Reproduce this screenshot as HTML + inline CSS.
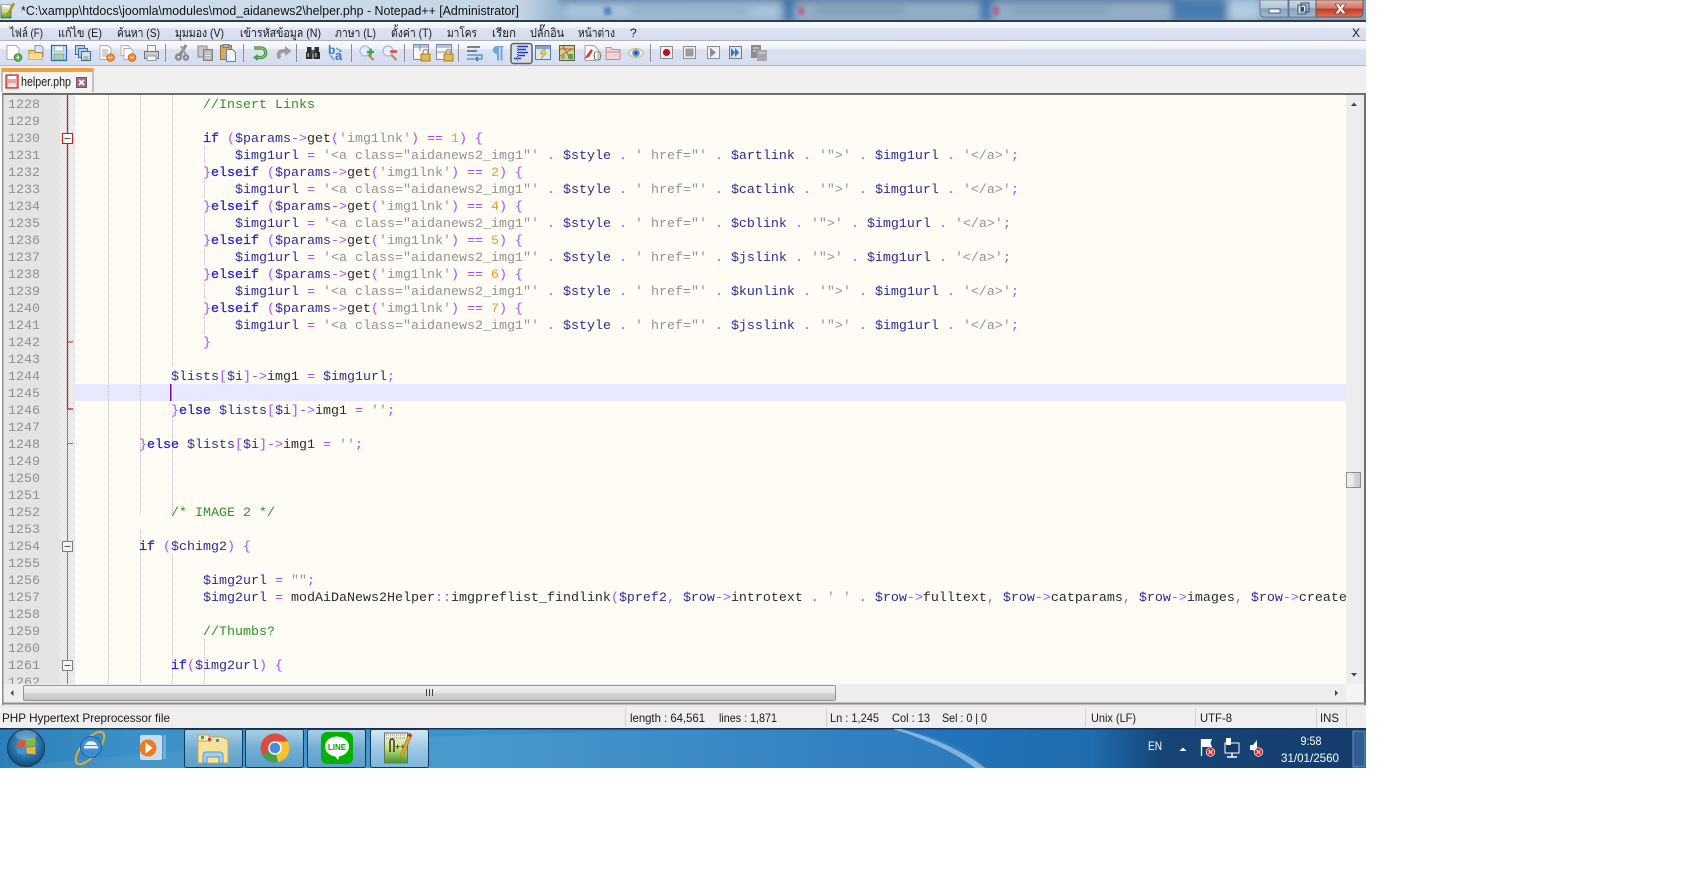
<!DOCTYPE html>
<html><head><meta charset="utf-8"><title>helper.php - Notepad++</title>
<style>
html,body{margin:0;padding:0;background:#fff;width:1694px;height:876px;overflow:hidden}
svg{display:block}
text{white-space:pre}
.m{font-family:"Liberation Mono","DejaVu Sans Mono",monospace;font-size:13.333px;fill:#000;fill-opacity:.84}
.ln{fill:#808080}
.k{fill:#0000c8;stroke:#0000c8;stroke-width:.25}.v{fill:#000080}.o{fill:#8000ff;fill-opacity:.7}.s{fill:#808080;fill-opacity:.85}.n{fill:#ff8000}.c{fill:#008000}.d{fill:#000}
.u{font-family:"Liberation Sans","Noto Sans CJK JP",sans-serif;font-size:12px;fill:#1a1a1a}
.t{font-family:"Liberation Sans","Noto Sans CJK JP",sans-serif;font-size:12px;fill:#fff}
</style></head><body>
<svg xmlns="http://www.w3.org/2000/svg" width="1694" height="876" viewBox="0 0 1694 876">
<defs>
<filter id="b" x="-5%" y="-50%" width="110%" height="200%"><feGaussianBlur stdDeviation="4"/></filter>
<filter id="b1" x="-50%" y="-50%" width="200%" height="200%"><feGaussianBlur stdDeviation="1.5"/></filter>
<linearGradient id="menu" x1="0" y1="0" x2="0" y2="1"><stop offset="0" stop-color="#fbfcfe"/><stop offset=".3" stop-color="#eef1f9"/><stop offset=".35" stop-color="#dce2f1"/><stop offset="1" stop-color="#d5dcee"/></linearGradient>
<linearGradient id="title" x1="0" y1="0" x2="1" y2="0"><stop offset="0" stop-color="#d3e1ee"/><stop offset=".38" stop-color="#c4d6e6"/><stop offset=".42" stop-color="#86a8c6"/><stop offset="1" stop-color="#7fa2c4"/></linearGradient>
<linearGradient id="tb" x1="0" y1="0" x2="1" y2="0"><stop offset="0" stop-color="#2b7fb8"/><stop offset=".1" stop-color="#3c92c8"/><stop offset=".35" stop-color="#3f94cc"/><stop offset=".7" stop-color="#2273ba"/><stop offset=".8" stop-color="#1f6cae"/><stop offset=".85" stop-color="#164577"/><stop offset="1" stop-color="#153c6e"/></linearGradient>
<linearGradient id="btn" x1="0" y1="0" x2="0" y2="1"><stop offset="0" stop-color="#a9d0e8"/><stop offset=".5" stop-color="#72add3"/><stop offset="1" stop-color="#5b9fcb"/></linearGradient>
<linearGradient id="btn2" x1="0" y1="0" x2="0" y2="1"><stop offset="0" stop-color="#d3e8f5"/><stop offset=".5" stop-color="#9cc8e4"/><stop offset="1" stop-color="#7db6dc"/></linearGradient>
<linearGradient id="sb" x1="0" y1="0" x2="0" y2="1"><stop offset="0" stop-color="#f2f2f2"/><stop offset=".5" stop-color="#e4e4e4"/><stop offset=".55" stop-color="#d3d3d3"/><stop offset="1" stop-color="#c4c4c4"/></linearGradient>
<linearGradient id="sbv" x1="0" y1="0" x2="1" y2="0"><stop offset="0" stop-color="#f2f2f2"/><stop offset=".5" stop-color="#e6e6e6"/><stop offset=".55" stop-color="#d6d6d6"/><stop offset="1" stop-color="#c8c8c8"/></linearGradient>
<linearGradient id="wb" x1="0" y1="0" x2="0" y2="1"><stop offset="0" stop-color="#ccd9e6"/><stop offset=".45" stop-color="#b4c5d8"/><stop offset=".5" stop-color="#8aa2bc"/><stop offset="1" stop-color="#a4b8cc"/></linearGradient>
<linearGradient id="wc" x1="0" y1="0" x2="0" y2="1"><stop offset="0" stop-color="#e2b0a6"/><stop offset=".45" stop-color="#d27a6a"/><stop offset=".55" stop-color="#c03c28"/><stop offset="1" stop-color="#d8765a"/></linearGradient>
<radialGradient id="orb" cx=".5" cy=".4" r=".6"><stop offset="0" stop-color="#5aa8d4"/><stop offset=".75" stop-color="#1f6498"/><stop offset="1" stop-color="#154a72"/></radialGradient>
<pattern id="hat" width="2" height="2" patternUnits="userSpaceOnUse"><rect width="2" height="2" fill="#fbfbfb"/><rect width="1" height="1" fill="#dcdcdc"/><rect x="1" y="1" width="1" height="1" fill="#dcdcdc"/></pattern>
<clipPath id="ed"><rect x="3" y="95" width="1343" height="589"/></clipPath>
<clipPath id="ed2"><rect x="75" y="95" width="1271" height="589"/></clipPath>
<linearGradient id="npp" x1="0" y1="0" x2="0" y2="1"><stop offset="0" stop-color="#f4f6e8"/><stop offset=".5" stop-color="#c9df7a"/><stop offset="1" stop-color="#3f9a2c"/></linearGradient>
</defs>

<rect width="1694" height="876" fill="#fff"/>

<!-- title bar -->
<rect x="0" y="0" width="1366" height="21" fill="url(#title)"/>
<g filter="url(#b)">
<rect x="565" y="2" width="215" height="19" fill="#a6c2da"/>
<rect x="784" y="-2" width="10" height="24" fill="#3c78b0"/>
<rect x="797" y="2" width="180" height="19" fill="#94aec8"/>
<rect x="981" y="-2" width="10" height="24" fill="#3c78b0"/>
<rect x="995" y="2" width="175" height="19" fill="#94aec8"/>
<rect x="1172" y="-2" width="56" height="24" fill="#4a7cae"/>
<rect x="1228" y="0" width="32" height="21" fill="#b4cadf"/>
<rect x="630" y="9" width="120" height="4" fill="#7e9ab4"/>
<rect x="815" y="9" width="90" height="4" fill="#6f8aa6"/>
<rect x="1010" y="9" width="100" height="4" fill="#7a94ae"/>
<rect x="560" y="-3" width="620" height="5" fill="#33618e"/>
</g>
<rect x="604" y="7" width="7" height="8" fill="#4a86c0" filter="url(#b1)"/>
<rect x="798" y="7" width="6" height="8" fill="#b06a8c" filter="url(#b1)"/>
<rect x="993" y="7" width="6" height="8" fill="#b0608c" filter="url(#b1)"/>
<!-- app icon -->
<g>
<path d="M1 5h10v13H1z" fill="url(#npp)" stroke="#555" stroke-width=".8"/>
<path d="M1.500 5h9v2h-9z" fill="#fff"/>
<path d="M13 3l1.600 1-5.400 10-1.600.6.1-1.600z" fill="#e0a020" stroke="#7a5a10" stroke-width=".5"/>
</g>
<text x="21" y="15" font-family="Liberation Sans,sans-serif" font-size="12.5" fill="#111" textLength="498" lengthAdjust="spacingAndGlyphs">*C:\xampp\htdocs\joomla\modules\mod_aidanews2\helper.php - Notepad++ [Administrator]</text>
<!-- caption buttons -->
<path d="M1260 0h28v17h-24a4 4 0 0 1-4-4z" fill="url(#wb)" stroke="#5a6e84" stroke-width=".8"/>
<rect x="1289" y="0" width="27" height="17" fill="url(#wb)" stroke="#5a6e84" stroke-width=".8"/>
<path d="M1316 0h47v13a4 4 0 0 1-4 4h-43z" fill="url(#wc)" stroke="#6a4a4a" stroke-width=".8"/>
<rect x="1269" y="9" width="11" height="4" fill="#f2f6fa" stroke="#3b4c60" stroke-width=".8"/>
<rect x="1298" y="5" width="8" height="9" fill="#dfe8f0" stroke="#3b4c60" stroke-width="1"/>
<rect x="1301" y="3" width="8" height="9" fill="none" stroke="#3b4c60" stroke-width="1"/>
<rect x="1301" y="7" width="3" height="4" fill="#3b4c60"/>
<path d="M1335 4l4 0 1.500 2.400L1342 4h4l-3.500 4.800 3.800 5h-4l-1.800-2.700-1.800 2.700h-4l3.800-5z" fill="#f5f0ee" stroke="#6a2a20" stroke-width=".6"/>
<rect x="0" y="20" width="1366" height="2" fill="#2c3e50"/>

<!-- menu bar -->
<rect x="0" y="22" width="1366" height="19" fill="url(#menu)"/>
<rect x="0" y="40" width="1366" height="1" fill="#aeb2bb"/>
<text class="u" x="10" y="37" textLength="33" lengthAdjust="spacingAndGlyphs">ไฟล์ (F)</text>
<text class="u" x="58" y="37" textLength="44" lengthAdjust="spacingAndGlyphs">แก้ไข (E)</text>
<text class="u" x="117" y="37" textLength="43" lengthAdjust="spacingAndGlyphs">ค้นหา (S)</text>
<text class="u" x="175" y="37" textLength="49" lengthAdjust="spacingAndGlyphs">มุมมอง (V)</text>
<text class="u" x="240" y="37" textLength="81" lengthAdjust="spacingAndGlyphs">เข้ารหัสข้อมูล (N)</text>
<text class="u" x="335" y="37" textLength="41" lengthAdjust="spacingAndGlyphs">ภาษา (L)</text>
<text class="u" x="391" y="37" textLength="41" lengthAdjust="spacingAndGlyphs">ตั้งค่า (T)</text>
<text class="u" x="447" y="37" textLength="30" lengthAdjust="spacingAndGlyphs">มาโคร</text>
<text class="u" x="492" y="37" textLength="24" lengthAdjust="spacingAndGlyphs">เรียก</text>
<text class="u" x="530" y="37" textLength="34" lengthAdjust="spacingAndGlyphs">ปลั๊กอิน</text>
<text class="u" x="578" y="37" textLength="37" lengthAdjust="spacingAndGlyphs">หน้าต่าง</text>
<text class="u" x="630" y="37">?</text>
<text class="u" x="1352" y="37">X</text>

<!-- toolbar -->
<rect x="0" y="41" width="1366" height="25" fill="url(#menu)"/>
<rect x="0" y="65" width="1366" height="1" fill="#b4b8c4"/>
<g stroke="#8c8f96" stroke-width="1">
<path d="M165.500 44v18M243.500 44v18M296.500 44v18M351.500 44v18M404.500 44v18M458.500 44v18M650.500 44v18"/>
</g>
<!-- new -->
<g transform="translate(6,45)"><path d="M1 .5h9l3 3v11H1z" fill="#fff" stroke="#a8aeb8"/><circle cx="12" cy="12.500" r="4" fill="#5aa845" stroke="#2f7a2a" stroke-width=".6"/><path d="M10 12.500h4M12 10.500v4" stroke="#fff" stroke-width="1.100"/></g>
<!-- open -->
<g transform="translate(28,45)"><path d="M7 .5h6l2 2v9H7z" fill="#d9e6f6" stroke="#7e9cc4"/><path d="M1 5.500h5l1.500 2H14v7H1z" fill="#f2cd70" stroke="#b08a30"/><path d="M1 9h13v5.500H1z" fill="#f7dc92"/></g>
<!-- save -->
<g transform="translate(51,45)"><path d="M.5.500h15v15H.5z" fill="#cfe0f5" stroke="#2f65b4" stroke-width="1.200"/><rect x="3.500" y="1" width="9" height="5" fill="#f8fbff" stroke="#6f92c4" stroke-width=".6"/><rect x="3" y="9" width="10" height="6" fill="#a9d29a" stroke="#5a8fa0" stroke-width=".6"/></g>
<!-- save all -->
<g transform="translate(75,45)"><rect x=".5" y=".5" width="9" height="9" fill="#bcd2ec" stroke="#48709e"/><rect x="3.500" y="3.500" width="9" height="9" fill="#bcd2ec" stroke="#48709e"/><rect x="6.500" y="6.500" width="9" height="9" fill="#cfe0f5" stroke="#3b69a4"/><rect x="8.500" y="11" width="5" height="4" fill="#9cc492"/></g>
<!-- close -->
<g transform="translate(99,45)"><path d="M1 .5h8l3 3v11H1z" fill="#fff" stroke="#a8aeb8"/><path d="M3 5h6M3 7h6M3 9h5M3 11h4" stroke="#9aa0aa"/><circle cx="11.500" cy="12.500" r="4" fill="#ee8a2e" stroke="#b8561a" stroke-width=".6"/><path d="M9.500 12.500h4" stroke="#fff" stroke-width="1.300"/></g>
<!-- close all -->
<g transform="translate(120,45)"><path d="M1 .5h7l2 2v8H1z" fill="#fff" stroke="#b0b4bc"/><path d="M4 3.500h7l2 2v9H4z" fill="#fff" stroke="#a8aeb8"/><circle cx="12" cy="12.500" r="4" fill="#ee8a2e" stroke="#b8561a" stroke-width=".6"/><path d="M10 12.500h4" stroke="#fff" stroke-width="1.300"/></g>
<!-- print -->
<g transform="translate(143,45)"><rect x="4.500" y=".5" width="8" height="6" fill="#f4f5f8" stroke="#8f97a3"/><path d="M1.500 6.500h14v7h-14z" fill="#c9ccd2" stroke="#6f7680"/><rect x="4" y="11" width="9" height="4.500" fill="#fff" stroke="#8f97a3"/></g>
<!-- cut -->
<g transform="translate(174,45)" stroke="#8a8c90" fill="none"><path d="M12 0L6 10" stroke-width="3"/><path d="M7 1l5 9" stroke-width="2.200" stroke="#a0a2a6"/><circle cx="4.500" cy="12" r="2.500" stroke-width="2.400"/><circle cx="12" cy="12.500" r="2.200" stroke-width="2.200"/></g>
<!-- copy -->
<g transform="translate(197,45)"><rect x="1" y="1" width="9" height="11" fill="#c8c8c8" stroke="#8a8a8a"/><rect x="6.500" y="4.500" width="9" height="11" fill="#b4b4b4" stroke="#7e7e7e"/><path d="M8.500 8h5M8.500 10.500h5M8.500 13h5" stroke="#e6e6e6"/></g>
<!-- paste -->
<g transform="translate(220,44)"><rect x=".5" y="1.500" width="11" height="14" fill="#d9a860" stroke="#96733a"/><rect x="3" y=".5" width="6" height="3" fill="#b8b8b0" stroke="#7c7c70"/><path d="M6.500 5.500h6l3 3v9h-9z" fill="#eef4fc" stroke="#5a85b8"/></g>
<!-- undo -->
<g transform="translate(251,45)" fill="none"><path d="M3 3h7a4.500 4.500 0 0 1 0 9.500H5" stroke="#3f8f3a" stroke-width="3.200"/><path d="M3 3h7a4.500 4.500 0 0 1 0 9.500H5" stroke="#8ccc70" stroke-width="1.200"/><path d="M7 9l-5 3.500L7 16z" fill="#4f9f44"/></g>
<!-- redo -->
<g transform="translate(275,45)" fill="none"><path d="M13 6H8a4 4 0 0 0-3 7" stroke="#9a9c9e" stroke-width="3.800"/><path d="M10 1l6.500 5-6.500 5z" fill="#9a9c9e"/></g>
<!-- find -->
<g transform="translate(305,45)" fill="#2e2e2e"><rect x="2" y="2" width="4.500" height="5"/><rect x="9.500" y="2" width="4.500" height="5"/><rect x="1" y="7" width="6.500" height="7"/><rect x="8.500" y="7" width="6.500" height="7"/><rect x="6.500" y="5" width="3" height="4" fill="#555"/><rect x="2.500" y="8" width="1.500" height="4" fill="#aaa"/><rect x="10" y="8" width="1.500" height="4" fill="#aaa"/></g>
<!-- replace -->
<g transform="translate(328,45)"><text x="0" y="9" font-family="Liberation Sans,sans-serif" font-weight="bold" font-size="12" fill="#2f7fc0">b</text><text x="7" y="15" font-family="Liberation Sans,sans-serif" font-weight="bold" font-size="13" fill="#3a6fc4">a</text><path d="M8 3l5 3-2 1M2 10l4 5" stroke="#3fa0c8" stroke-width="1.200" fill="none"/></g>
<!-- zoom in/out -->
<g transform="translate(359,45)"><circle cx="6" cy="6" r="5" fill="#e3eefa" stroke="#a4bfdc" stroke-width="1.300"/><path d="M9.500 10l5 5" stroke="#b88a50" stroke-width="2.200"/><path d="M8 7h7M11.500 3.500v7" stroke="#46a040" stroke-width="2.400"/></g>
<g transform="translate(382,45)"><circle cx="6" cy="6" r="5" fill="#e9eef8" stroke="#a4bfdc" stroke-width="1.300"/><path d="M9.500 10l5 5" stroke="#b88a50" stroke-width="2.200"/><path d="M8 6.500h7" stroke="#d8504a" stroke-width="2.600"/></g>
<!-- sync -->
<g transform="translate(413,44)"><rect x=".5" y=".5" width="15" height="15" fill="#f7f8fb" stroke="#7a8ca8"/><rect x="1" y="1" width="14" height="3" fill="#a8c4e6"/><path d="M7 1v6" stroke="#7a8ca8"/><rect x="8" y="10" width="9" height="7" fill="#e8b848" stroke="#a87e20"/><path d="M10 10V8a2.500 2.500 0 0 1 5 0v2" fill="none" stroke="#9a8a60" stroke-width="1.200"/></g>
<g transform="translate(436,44)"><rect x=".5" y=".5" width="15" height="15" fill="#f7f8fb" stroke="#7a8ca8"/><rect x="1" y="1" width="14" height="3" fill="#a8c4e6"/><path d="M1 8h14" stroke="#7a8ca8"/><rect x="8" y="10" width="9" height="7" fill="#e8b848" stroke="#a87e20"/><path d="M10 10V8a2.500 2.500 0 0 1 5 0v2" fill="none" stroke="#9a8a60" stroke-width="1.200"/></g>
<!-- wrap -->
<g transform="translate(467,46)" fill="none" stroke-width="1.500"><path d="M0 1h13M0 5h10" stroke="#555c68"/><path d="M0 9h15v4h-5" stroke="#5a9ad0"/><path d="M0 13h7" stroke="#5a9ad0"/><path d="M11 11l-2.500 2 2.500 2" stroke="#3a78b8"/></g>
<!-- para -->
<g transform="translate(491,45)"><path d="M5.500 1h7v1.500h-1v13H9.500V2.500H8v13H6V9a4 4 0 0 1-.5-8z" fill="#6ea8dc"/></g>
<!-- indent guide active -->
<rect x="511" y="43.500" width="21" height="20" rx="2.500" fill="#d9dde8" stroke="#5a6068" stroke-width="1.500"/>
<g transform="translate(514,46)" stroke-width="1.400"><path d="M4 .5h10M4 3.500h8M4 6.500h10M4 9.500h7M0 12.500h7" stroke="#1d3fb8"/><path d="M3.500 0v15" stroke="#b03030" stroke-width="1" stroke-dasharray="1 1"/></g>
<!-- doc map -->
<g transform="translate(535,45)"><rect x=".5" y=".5" width="15" height="14" fill="#dce8f6" stroke="#5a7ea8"/><rect x="1" y="1" width="14" height="3" fill="#7ea6d8"/><path d="M7 5l4-1-2 4h3l-6 6 2-5H5z" fill="#f2c648" stroke="#c09420" stroke-width=".5"/></g>
<g transform="translate(559,45)"><rect x=".5" y=".5" width="15" height="15" fill="#d9cf8a" stroke="#55604a"/><path d="M1 4h14M4 1l8 14M1 11l12-7" stroke="#b8583a" fill="none"/><rect x="9" y="9" width="5" height="5" fill="#5f9f50"/><rect x="2" y="10" width="4" height="4" fill="#8fb070"/></g>
<!-- function list -->
<g transform="translate(583,45)"><path d="M2 .5h9l4 4v11H2z" fill="#fbfbfb" stroke="#a4a4a8"/><path d="M1 14L8 4l2 1.500L6 12z" fill="#d84030"/><text x="9" y="13" font-family="Liberation Mono,monospace" font-size="9" fill="#555">{}</text></g>
<!-- folder -->
<g transform="translate(605,45)"><path d="M1 2.500h5l1.500 2h7.500v10H1z" fill="#f2d4d4" stroke="#c88c8c"/><path d="M1 7h14" stroke="#c88c8c"/></g>
<!-- eye -->
<g transform="translate(628,45)"><path d="M0 8C4 2 12 2 16 8 12 14 4 14 0 8z" fill="#f2ead8" stroke="#c8b890"/><circle cx="8" cy="8" r="3.800" fill="#5a98c8"/><circle cx="8" cy="8" r="1.500" fill="#1d4a78"/></g>
<!-- macro -->
<g stroke="#8a8f98" fill="#eef0f6"><rect x="660.500" y="46.500" width="12" height="12"/><rect x="683.500" y="46.500" width="12" height="12"/><rect x="707.500" y="46.500" width="12" height="12"/></g>
<circle cx="666.500" cy="52.500" r="3.600" fill="#c0101c"/>
<rect x="685.500" y="48.500" width="8" height="8" fill="#9c9c9c"/>
<path d="M710 47.500l6 5-6 5z" fill="#8c8c8c"/>
<rect x="729.500" y="46.500" width="12" height="12" fill="#dde4f2" stroke="#6a7a98"/>
<path d="M731 48l4 4.500-4 4.500zM735 48l4 4.500-4 4.500z" fill="#2f6fd0"/>
<rect x="751" y="45" width="10" height="13" fill="#8c8c8c"/>
<rect x="757" y="50" width="10" height="11" fill="#a8a8a8"/>
<path d="M753 48h6M753 51h3M759 53h6" stroke="#e6e6e6"/>

<!-- tab strip -->
<rect x="0" y="66" width="1366" height="27" fill="#f0f0f0"/>
<path d="M2 92V68.500h91V92" fill="#f4f4f4" stroke="#8f8f8f"/>
<rect x="2" y="68" width="91" height="4" fill="#f0a040"/>
<rect x="6" y="75" width="12" height="13" fill="#f4a0a0" stroke="#c82828" stroke-width="1.200"/>
<rect x="8" y="76" width="8" height="3" fill="#fff"/><rect x="8" y="83" width="8" height="4" fill="#e8e8e8"/>
<text class="u" x="21" y="86" textLength="50" lengthAdjust="spacingAndGlyphs" style="font-size:13px">helper.php</text>
<rect x="76.500" y="77.500" width="10" height="10" fill="#a46a8a" stroke="#80506a"/>
<path d="M79 80l5 5M84 80l-5 5" stroke="#fff" stroke-width="1.700"/>

<!-- editor frame -->
<rect x="2" y="93" width="1364" height="612" fill="#f0f0f0"/>
<rect x="2" y="93" width="1364" height="2" fill="#6e6e6e"/>
<rect x="2" y="93" width="1.500" height="612" fill="#8a8a8a"/>
<rect x="1364" y="93" width="2" height="612" fill="#6e6e6e"/>
<rect x="2" y="702.500" width="1364" height="2" fill="#8c8c8c"/>
<rect x="0" y="705" width="1366" height="2" fill="#e8e8e8"/>

<rect x="4" y="95" width="56" height="589" fill="#e4e4e4"/>
<rect x="60" y="95" width="15" height="589" fill="url(#hat)"/>
<rect x="75" y="95" width="1271" height="589" fill="#fffcf5"/>
<rect x="75" y="384" width="1271" height="17" fill="#e8e8fe"/>

<!-- indent guides -->
<g stroke="#c0c0c0" stroke-dasharray="1 1" stroke-width="1">
<path d="M108.500 95V684M140.500 95V514M140.500 530V684M172.500 95V367M172.500 555V684M172.500 412V516"/>
<path d="M204.500 146v17M204.500 180v17M204.500 214v17M204.500 248v17M204.500 282v17M204.500 316v17M204.500 639V684"/>
</g>

<g clip-path="url(#ed)"><g transform="translate(-1,-1)">
<text class="m ln" x="9" y="109">1228</text>
<text class="m ln" x="9" y="126">1229</text>
<text class="m ln" x="9" y="143">1230</text>
<text class="m ln" x="9" y="160">1231</text>
<text class="m ln" x="9" y="177">1232</text>
<text class="m ln" x="9" y="194">1233</text>
<text class="m ln" x="9" y="211">1234</text>
<text class="m ln" x="9" y="228">1235</text>
<text class="m ln" x="9" y="245">1236</text>
<text class="m ln" x="9" y="262">1237</text>
<text class="m ln" x="9" y="279">1238</text>
<text class="m ln" x="9" y="296">1239</text>
<text class="m ln" x="9" y="313">1240</text>
<text class="m ln" x="9" y="330">1241</text>
<text class="m ln" x="9" y="347">1242</text>
<text class="m ln" x="9" y="364">1243</text>
<text class="m ln" x="9" y="381">1244</text>
<text class="m ln" x="9" y="398">1245</text>
<text class="m ln" x="9" y="415">1246</text>
<text class="m ln" x="9" y="432">1247</text>
<text class="m ln" x="9" y="449">1248</text>
<text class="m ln" x="9" y="466">1249</text>
<text class="m ln" x="9" y="483">1250</text>
<text class="m ln" x="9" y="500">1251</text>
<text class="m ln" x="9" y="517">1252</text>
<text class="m ln" x="9" y="534">1253</text>
<text class="m ln" x="9" y="551">1254</text>
<text class="m ln" x="9" y="568">1255</text>
<text class="m ln" x="9" y="585">1256</text>
<text class="m ln" x="9" y="602">1257</text>
<text class="m ln" x="9" y="619">1258</text>
<text class="m ln" x="9" y="636">1259</text>
<text class="m ln" x="9" y="653">1260</text>
<text class="m ln" x="9" y="670">1261</text>
<text class="m ln" x="9" y="687">1262</text>
</g></g>

<!-- fold margin -->
<path d="M67.500 95V409H73" fill="none" stroke="#c41e1e" stroke-width="1.300"/>
<path d="M67.500 342H73" stroke="#c41e1e"/>
<path d="M67.500 409V684M67.500 443.500H73" fill="none" stroke="#808080"/>
<rect x="62.500" y="133.500" width="10" height="10" fill="#fbf6f0" stroke="#c41e1e"/><path d="M64.500 138.500h6" stroke="#555"/>
<rect x="62.500" y="541.500" width="10" height="10" fill="#f4f4f4" stroke="#808080"/><path d="M64.500 546.500h6" stroke="#555"/>
<rect x="62.500" y="660.500" width="10" height="10" fill="#f4f4f4" stroke="#808080"/><path d="M64.500 665.500h6" stroke="#555"/>

<!-- code -->
<g clip-path="url(#ed2)"><rect x="170" y="384" width="1.500" height="17" fill="#8000c0"/><g transform="translate(-1,-1)">
<text class="m c" x="204" y="109">//Insert Links</text>
<text class="m" x="204" y="143"><tspan class="k">if</tspan> <tspan class="o">(</tspan><tspan class="v">$params</tspan><tspan class="o">-&gt;</tspan><tspan class="d">get</tspan><tspan class="o">(</tspan><tspan class="s">'img1lnk'</tspan><tspan class="o">)</tspan> <tspan class="o">==</tspan> <tspan class="n">1</tspan><tspan class="o">)</tspan> <tspan class="o">{</tspan></text>
<text class="m" x="236" y="160"><tspan class="v">$img1url</tspan> <tspan class="o">=</tspan> <tspan class="s">'&lt;a class="aidanews2_img1"'</tspan> <tspan class="o">.</tspan> <tspan class="v">$style</tspan> <tspan class="o">.</tspan> <tspan class="s">' href="'</tspan> <tspan class="o">.</tspan> <tspan class="v">$artlink</tspan> <tspan class="o">.</tspan> <tspan class="s">'"&gt;'</tspan> <tspan class="o">.</tspan> <tspan class="v">$img1url</tspan> <tspan class="o">.</tspan> <tspan class="s">'&lt;/a&gt;'</tspan><tspan class="o">;</tspan></text>
<text class="m" x="204" y="177"><tspan class="o">}</tspan><tspan class="k">elseif</tspan> <tspan class="o">(</tspan><tspan class="v">$params</tspan><tspan class="o">-&gt;</tspan><tspan class="d">get</tspan><tspan class="o">(</tspan><tspan class="s">'img1lnk'</tspan><tspan class="o">)</tspan> <tspan class="o">==</tspan> <tspan class="n">2</tspan><tspan class="o">)</tspan> <tspan class="o">{</tspan></text>
<text class="m" x="236" y="194"><tspan class="v">$img1url</tspan> <tspan class="o">=</tspan> <tspan class="s">'&lt;a class="aidanews2_img1"'</tspan> <tspan class="o">.</tspan> <tspan class="v">$style</tspan> <tspan class="o">.</tspan> <tspan class="s">' href="'</tspan> <tspan class="o">.</tspan> <tspan class="v">$catlink</tspan> <tspan class="o">.</tspan> <tspan class="s">'"&gt;'</tspan> <tspan class="o">.</tspan> <tspan class="v">$img1url</tspan> <tspan class="o">.</tspan> <tspan class="s">'&lt;/a&gt;'</tspan><tspan class="o">;</tspan></text>
<text class="m" x="204" y="211"><tspan class="o">}</tspan><tspan class="k">elseif</tspan> <tspan class="o">(</tspan><tspan class="v">$params</tspan><tspan class="o">-&gt;</tspan><tspan class="d">get</tspan><tspan class="o">(</tspan><tspan class="s">'img1lnk'</tspan><tspan class="o">)</tspan> <tspan class="o">==</tspan> <tspan class="n">4</tspan><tspan class="o">)</tspan> <tspan class="o">{</tspan></text>
<text class="m" x="236" y="228"><tspan class="v">$img1url</tspan> <tspan class="o">=</tspan> <tspan class="s">'&lt;a class="aidanews2_img1"'</tspan> <tspan class="o">.</tspan> <tspan class="v">$style</tspan> <tspan class="o">.</tspan> <tspan class="s">' href="'</tspan> <tspan class="o">.</tspan> <tspan class="v">$cblink</tspan> <tspan class="o">.</tspan> <tspan class="s">'"&gt;'</tspan> <tspan class="o">.</tspan> <tspan class="v">$img1url</tspan> <tspan class="o">.</tspan> <tspan class="s">'&lt;/a&gt;'</tspan><tspan class="o">;</tspan></text>
<text class="m" x="204" y="245"><tspan class="o">}</tspan><tspan class="k">elseif</tspan> <tspan class="o">(</tspan><tspan class="v">$params</tspan><tspan class="o">-&gt;</tspan><tspan class="d">get</tspan><tspan class="o">(</tspan><tspan class="s">'img1lnk'</tspan><tspan class="o">)</tspan> <tspan class="o">==</tspan> <tspan class="n">5</tspan><tspan class="o">)</tspan> <tspan class="o">{</tspan></text>
<text class="m" x="236" y="262"><tspan class="v">$img1url</tspan> <tspan class="o">=</tspan> <tspan class="s">'&lt;a class="aidanews2_img1"'</tspan> <tspan class="o">.</tspan> <tspan class="v">$style</tspan> <tspan class="o">.</tspan> <tspan class="s">' href="'</tspan> <tspan class="o">.</tspan> <tspan class="v">$jslink</tspan> <tspan class="o">.</tspan> <tspan class="s">'"&gt;'</tspan> <tspan class="o">.</tspan> <tspan class="v">$img1url</tspan> <tspan class="o">.</tspan> <tspan class="s">'&lt;/a&gt;'</tspan><tspan class="o">;</tspan></text>
<text class="m" x="204" y="279"><tspan class="o">}</tspan><tspan class="k">elseif</tspan> <tspan class="o">(</tspan><tspan class="v">$params</tspan><tspan class="o">-&gt;</tspan><tspan class="d">get</tspan><tspan class="o">(</tspan><tspan class="s">'img1lnk'</tspan><tspan class="o">)</tspan> <tspan class="o">==</tspan> <tspan class="n">6</tspan><tspan class="o">)</tspan> <tspan class="o">{</tspan></text>
<text class="m" x="236" y="296"><tspan class="v">$img1url</tspan> <tspan class="o">=</tspan> <tspan class="s">'&lt;a class="aidanews2_img1"'</tspan> <tspan class="o">.</tspan> <tspan class="v">$style</tspan> <tspan class="o">.</tspan> <tspan class="s">' href="'</tspan> <tspan class="o">.</tspan> <tspan class="v">$kunlink</tspan> <tspan class="o">.</tspan> <tspan class="s">'"&gt;'</tspan> <tspan class="o">.</tspan> <tspan class="v">$img1url</tspan> <tspan class="o">.</tspan> <tspan class="s">'&lt;/a&gt;'</tspan><tspan class="o">;</tspan></text>
<text class="m" x="204" y="313"><tspan class="o">}</tspan><tspan class="k">elseif</tspan> <tspan class="o">(</tspan><tspan class="v">$params</tspan><tspan class="o">-&gt;</tspan><tspan class="d">get</tspan><tspan class="o">(</tspan><tspan class="s">'img1lnk'</tspan><tspan class="o">)</tspan> <tspan class="o">==</tspan> <tspan class="n">7</tspan><tspan class="o">)</tspan> <tspan class="o">{</tspan></text>
<text class="m" x="236" y="330"><tspan class="v">$img1url</tspan> <tspan class="o">=</tspan> <tspan class="s">'&lt;a class="aidanews2_img1"'</tspan> <tspan class="o">.</tspan> <tspan class="v">$style</tspan> <tspan class="o">.</tspan> <tspan class="s">' href="'</tspan> <tspan class="o">.</tspan> <tspan class="v">$jsslink</tspan> <tspan class="o">.</tspan> <tspan class="s">'"&gt;'</tspan> <tspan class="o">.</tspan> <tspan class="v">$img1url</tspan> <tspan class="o">.</tspan> <tspan class="s">'&lt;/a&gt;'</tspan><tspan class="o">;</tspan></text>
<text class="m o" x="204" y="347">}</text>
<text class="m" x="172" y="381"><tspan class="v">$lists</tspan><tspan class="o">[</tspan><tspan class="v">$i</tspan><tspan class="o">]-&gt;</tspan><tspan class="d">img1</tspan> <tspan class="o">=</tspan> <tspan class="v">$img1url</tspan><tspan class="o">;</tspan></text>
<text class="m" x="172" y="415"><tspan class="o">}</tspan><tspan class="k">else</tspan> <tspan class="v">$lists</tspan><tspan class="o">[</tspan><tspan class="v">$i</tspan><tspan class="o">]-&gt;</tspan><tspan class="d">img1</tspan> <tspan class="o">=</tspan> <tspan class="s">''</tspan><tspan class="o">;</tspan></text>
<text class="m" x="140" y="449"><tspan class="o">}</tspan><tspan class="k">else</tspan> <tspan class="v">$lists</tspan><tspan class="o">[</tspan><tspan class="v">$i</tspan><tspan class="o">]-&gt;</tspan><tspan class="d">img1</tspan> <tspan class="o">=</tspan> <tspan class="s">''</tspan><tspan class="o">;</tspan></text>
<text class="m c" x="172" y="517">/* IMAGE 2 */</text>
<text class="m" x="140" y="551"><tspan class="k">if</tspan> <tspan class="o">(</tspan><tspan class="v">$chimg2</tspan><tspan class="o">)</tspan> <tspan class="o">{</tspan></text>
<text class="m" x="204" y="585"><tspan class="v">$img2url</tspan> <tspan class="o">=</tspan> <tspan class="s">""</tspan><tspan class="o">;</tspan></text>
<text class="m" x="204" y="602"><tspan class="v">$img2url</tspan> <tspan class="o">=</tspan> <tspan class="d">modAiDaNews2Helper</tspan><tspan class="o">::</tspan><tspan class="d">imgpreflist_findlink</tspan><tspan class="o">(</tspan><tspan class="v">$pref2</tspan><tspan class="o">,</tspan> <tspan class="v">$row</tspan><tspan class="o">-&gt;</tspan><tspan class="d">introtext</tspan> <tspan class="o">.</tspan> <tspan class="s">' '</tspan> <tspan class="o">.</tspan> <tspan class="v">$row</tspan><tspan class="o">-&gt;</tspan><tspan class="d">fulltext</tspan><tspan class="o">,</tspan> <tspan class="v">$row</tspan><tspan class="o">-&gt;</tspan><tspan class="d">catparams</tspan><tspan class="o">,</tspan> <tspan class="v">$row</tspan><tspan class="o">-&gt;</tspan><tspan class="d">images</tspan><tspan class="o">,</tspan> <tspan class="v">$row</tspan><tspan class="o">-&gt;</tspan><tspan class="d">created</tspan></text>
<text class="m c" x="204" y="636">//Thumbs?</text>
<text class="m" x="172" y="670"><tspan class="k">if</tspan><tspan class="o">(</tspan><tspan class="v">$img2url</tspan><tspan class="o">)</tspan> <tspan class="o">{</tspan></text>
</g></g>

<!-- vertical scrollbar -->
<rect x="1346" y="95" width="18" height="590" fill="#ededed"/>
<path d="M1351 106l3-3.500 3 3.500z" fill="#444"/>
<path d="M1351 673l3 3.500 3-3.500z" fill="#444"/>
<rect x="1346.500" y="472.500" width="14" height="15" fill="url(#sbv)" stroke="#8f8f8f"/>

<!-- horizontal scrollbar -->
<rect x="4" y="684" width="1360" height="18" fill="#ededed"/>
<rect x="23.500" y="685.500" width="812" height="15" rx="1.500" fill="url(#sb)" stroke="#959595"/>
<path d="M426.500 689v7M429.500 689v7M432.500 689v7" stroke="#444"/>
<path d="M13.500 690l-3 3 3 3z" fill="#444"/>
<path d="M1335 690l3 3-3 3z" fill="#444"/>
<rect x="1346" y="684" width="18" height="18" fill="#f4f4f4"/>

<!-- status bar -->
<rect x="0" y="707" width="1366" height="21" fill="#f0eeee"/>
<path d="M625.500 708v19M826.500 708v19M1085.500 708v19M1195.500 708v19M1316.500 708v19M1346.500 708v19" stroke="#d2d0d0"/>
<text class="u" x="2" y="722" textLength="168" lengthAdjust="spacingAndGlyphs">PHP Hypertext Preprocessor file</text>
<text class="u" x="630" y="722" textLength="75" lengthAdjust="spacingAndGlyphs">length : 64,561</text>
<text class="u" x="719" y="722" textLength="58" lengthAdjust="spacingAndGlyphs">lines : 1,871</text>
<text class="u" x="830" y="722" textLength="49" lengthAdjust="spacingAndGlyphs">Ln : 1,245</text>
<text class="u" x="892" y="722" textLength="38" lengthAdjust="spacingAndGlyphs">Col : 13</text>
<text class="u" x="942" y="722" textLength="45" lengthAdjust="spacingAndGlyphs">Sel : 0 | 0</text>
<text class="u" x="1091" y="722" textLength="45" lengthAdjust="spacingAndGlyphs">Unix (LF)</text>
<text class="u" x="1200" y="722" textLength="32" lengthAdjust="spacingAndGlyphs">UTF-8</text>
<text class="u" x="1320" y="722" textLength="19" lengthAdjust="spacingAndGlyphs">INS</text>

<!-- taskbar -->
<rect x="0" y="728" width="1366" height="40" fill="url(#tb)"/>
<rect x="0" y="728" width="1366" height="1.500" fill="#17324f"/>
<path d="M0 768C200 745 500 730 760 730L900 730 C 940 735 970 750 986 768z" fill="#fff" opacity=".05"/>
<path d="M901 729C935 738 965 752 985 768L975 768C955 752 925 739 893 729z" fill="#9cc6ea" opacity=".75"/>
<rect x="1353" y="731" width="12" height="36" fill="#2e5f94" stroke="#7fa4c8" stroke-width=".8"/>
<!-- start orb -->
<circle cx="26" cy="748" r="18.500" fill="url(#orb)" stroke="#0e3a5c"/>
<path d="M17 742l8-2v7l-8 1z" fill="#e2532c"/><path d="M26.500 739.500l9-1.500v7.500l-9 1.500z" fill="#8cba2e"/><path d="M17 749l8-1v7l-8-1z" fill="#3b92d8"/><path d="M26.500 748l9-1.500v8l-9-1z" fill="#f2b428"/>
<ellipse cx="26" cy="735" rx="11" ry="5" fill="#fff" opacity=".22"/>
<!-- IE -->
<ellipse cx="90" cy="748" rx="20" ry="8" transform="rotate(-50 90 748)" fill="none" stroke="#d8ae3a" stroke-width="2"/>
<circle cx="91" cy="747" r="10.500" fill="#3a8ed6" stroke="#1d5e9c" stroke-width="1"/>
<path d="M85 745h12a6.500 6.500 0 0 0-12 0z" fill="#e8f3fb"/><rect x="84" y="746" width="14" height="2.500" fill="#e8f3fb"/>
<!-- WMP -->
<rect x="163" y="735" width="3" height="24" fill="#8fb8d8" opacity=".7"/>
<rect x="140" y="735" width="22" height="25" rx="2" fill="#c9dcec"/>
<circle cx="148" cy="748" r="8.500" fill="#ea7d1a"/><path d="M145.500 742.500l7 5.500-7 5.500z" fill="#fff"/>
<!-- task buttons -->
<rect x="184.500" y="729.500" width="58" height="38" rx="2" fill="url(#btn)" stroke="#123a5a"/>
<rect x="245.500" y="729.500" width="58" height="38" rx="2" fill="url(#btn)" stroke="#123a5a"/>
<rect x="307.500" y="729.500" width="58" height="38" rx="2" fill="url(#btn)" stroke="#123a5a"/>
<rect x="370.500" y="729.500" width="58" height="38" rx="2" fill="url(#btn2)" stroke="#123a5a"/>
<!-- explorer -->
<path d="M198 737h24l6 3v23h-30z" fill="#f5e39c" stroke="#c8a84a"/>
<rect x="198" y="735" width="11" height="6" fill="#f7eec0" stroke="#bba250"/><rect x="201" y="736" width="3" height="3" fill="#48a040"/><rect x="208" y="738" width="3" height="3" fill="#d04030"/><rect x="216" y="739" width="3" height="3" fill="#3a90d0"/>
<path d="M203 763v-8a3 3 0 0 1 3-3h14a3 3 0 0 1 3 3v8h-4v-6h-12v6z" fill="#9fd0ee" stroke="#5a98c8"/>
<!-- chrome -->
<circle cx="275" cy="748" r="14.500" fill="#dd4b3e"/>
<path d="M275 748L262.500 755.500A14.500 14.500 0 0 0 278 762.200z" fill="#3fa14a"/>
<path d="M275 748L278 762.200A14.500 14.500 0 0 0 288 741.500L275 741.500z" fill="#f8c42e"/>
<circle cx="275" cy="748" r="6.800" fill="#fff"/><circle cx="275" cy="748" r="5.300" fill="#4a88e8"/>
<!-- line -->
<rect x="321" y="732" width="32" height="32" rx="6" fill="#00b300"/>
<ellipse cx="337" cy="746.500" rx="12" ry="10" fill="#fff"/><path d="M334 755l4 5 2-5z" fill="#fff"/>
<text x="337" y="750" text-anchor="middle" font-family="Liberation Sans,sans-serif" font-weight="bold" font-size="8" fill="#00a800">LINE</text>
<!-- npp -->
<rect x="384.500" y="733" width="23" height="30" fill="url(#npp)" stroke="#6a7060"/>
<path d="M386 735h20M386 738h20" stroke="#888" stroke-dasharray="1 1"/>
<path d="M390 752v-11a2 2 0 0 1 4 0v11" fill="none" stroke="#111" stroke-width="1.200"/>
<text x="395" y="750" font-family="Liberation Sans,sans-serif" font-size="9" fill="#111">++</text>
<path d="M409 733l3 2-9 21-2.500 2 0-3.500z" fill="#e0a828" stroke="#886818" stroke-width=".5"/><path d="M409 733l3 2-1 2.500-3-2z" fill="#b8362c"/>
<!-- tray -->
<text class="t" x="1148" y="750" textLength="14" lengthAdjust="spacingAndGlyphs">EN</text>
<path d="M1179.500 751l3.500-3.500 3.500 3.500z" fill="#fff"/>
<path d="M1201.500 739v17" stroke="#fff" stroke-width="1.300"/><path d="M1202 739h10l-1.500 4 1.500 4h-10z" fill="#fff"/>
<circle cx="1210.500" cy="752" r="4.300" fill="#d8232a" stroke="#fff" stroke-width=".7"/><path d="M1208.500 750l4 4M1212.500 750l-4 4" stroke="#fff"/>
<path d="M1225 743h14v10h-14z" fill="#133a66" stroke="#fff"/><path d="M1232 753v3M1227 757h10" stroke="#fff" stroke-width="1.500"/><rect x="1226" y="738" width="5" height="7" fill="#fff"/>
<path d="M1250 745h3l4-5v15l-4-5h-3z" fill="#fff"/>
<circle cx="1258.500" cy="752" r="4.300" fill="#d8232a" stroke="#fff" stroke-width=".7"/><path d="M1256.500 750l4 4M1260.500 750l-4 4" stroke="#fff"/>
<text class="t" x="1311" y="745" text-anchor="middle" textLength="21" lengthAdjust="spacingAndGlyphs">9:58</text>
<text class="t" x="1281" y="762" textLength="58" lengthAdjust="spacingAndGlyphs">31/01/2560</text>
</svg>
</body></html>
